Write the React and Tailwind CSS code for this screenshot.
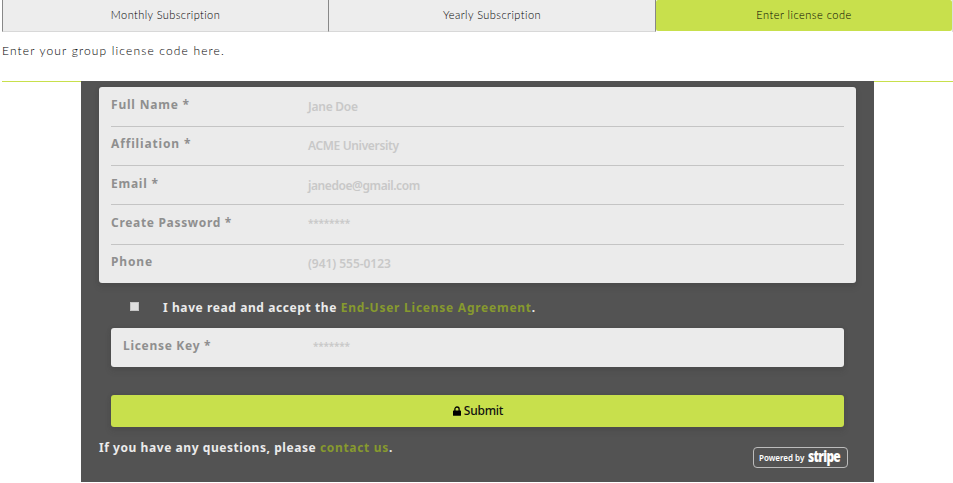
import React from "react";

const fields = [
  { label: "Full Name *", hint: "Jane Doe", row: "h-[40px] border-b", labelGap: "tracking-[0.8px]", hintGap: "pt-[2px] text-[12px] tracking-[-0.25px]", pad: "pt-[9px]" },
  { label: "Affiliation *", hint: "ACME University", row: "h-[39px] border-b", labelGap: "tracking-[0.85px]", hintGap: "pt-[2px] text-[12px] tracking-[-0.35px]", pad: "pt-[8px]" },
  { label: "Email *", hint: "janedoe@gmail.com", row: "h-[39px] border-b", labelGap: "tracking-[0.75px]", hintGap: "pt-[2px] text-[12px] tracking-[-0.42px]", pad: "pt-[9px]" },
  { label: "Create Password *", hint: "********", row: "h-[40px] border-b", labelGap: "tracking-[0.68px]", hintGap: "text-[10px] tracking-[-0.2px]", pad: "pt-[9px]" },
  { label: "Phone", hint: "(941) 555-0123", row: "h-[38px]", labelGap: "tracking-[0.85px]", hintGap: "pt-[2px] text-[12px] tracking-[-0.04px]", pad: "pt-[8px]" },
];

const shadow = "shadow-[0_4px_6px_rgba(50,50,50,0.15),0_0_4px_rgba(50,50,50,0.2)]";

function Field({ label, hint, row, labelGap, hintGap, pad }) {
  return (
    <div className={`flex items-start border-[#c4c4c4] ${row} ${pad}`}>
      <span className={`w-[197px] leading-[18px] text-[#8f8f8f] ${labelGap}`}>{label}</span>
      <span className={`leading-[18px] font-semibold text-[#c8c8c8] ${hintGap}`}>{hint}</span>
    </div>
  );
}

function Lock() {
  return (
    <svg className="h-[10px] w-[8px]" viewBox="0 0 8 10">
      <path d="M1.9 5V3.1a2.1 2.1 0 0 1 4.2 0V5" fill="none" stroke="#000" strokeWidth="1.3" />
      <rect y="4.5" width="8" height="5.3" rx=".6" fill="#000" />
    </svg>
  );
}

export default function App() {
  return (
    <div className="h-[483px] w-[953px] overflow-hidden bg-white font-['Noto_Sans',sans-serif] text-[12px]">
      <nav className="ml-[2px] flex h-[32px] font-['Lato',sans-serif] text-[11px] leading-[30px] font-light text-black">
        <div className="w-[326px] border-b border-l border-b-[#d8d8d8] border-l-[#888] bg-[#ededed] text-center tracking-[0.42px]">Monthly Subscription</div>
        <div className="w-[328px] border-x border-b border-x-[#888] border-b-[#d8d8d8] bg-[#ededed] text-center tracking-[0.45px]">Yearly Subscription</div>
        <div className="h-[31px] w-[296px] rounded-[2px] bg-[#c8e04c] text-center tracking-[0.5px]">Enter license code</div>
        <div className="w-px bg-[#ddd]" />
      </nav>
      <p className="ml-[2px] h-[49px] pt-[10px] font-['Lato',sans-serif] text-[12px] leading-[18px] font-light tracking-[1.15px] text-black">Enter your group license code here.</p>
      <div className="ml-[2px] flex">
        <div className="h-px w-[79px] bg-[#c8e04c]" />
        <main className="h-[401px] w-[793px] bg-[#535353] px-[18px] pt-[6px] font-bold">
          <section className={`h-[196px] w-[757px] rounded-[3px] bg-[#ebebeb] px-[12px] ${shadow}`}>
            {fields.map((field) => <Field key={field.label} {...field} />)}
          </section>
          <div className="flex h-[45px] items-start pt-[16px] pl-[31px]">
            <div className="mt-[3px] h-[9px] w-[9px] border border-[#c6c6c6] bg-[#e0e0e0]" />
            <span className="ml-[24px] leading-[18px] tracking-[0.59px] whitespace-nowrap text-[#ebebeb]">I have read and accept the <a className="tracking-[0.75px] text-[#879a2e]">End-User License Agreement</a>.</span>
          </div>
          <section className={`ml-[12px] flex h-[39px] w-[733px] items-start rounded-[3px] bg-[#ebebeb] px-[12px] pt-[9px] ${shadow}`}>
            <span className="w-[190px] leading-[18px] tracking-[0.7px] text-[#8f8f8f]">License Key *</span>
            <span className="text-[10px] leading-[18px] font-semibold tracking-[-0.2px] text-[#c8c8c8]">*******</span>
          </section>
          <button className={`mt-[28px] ml-[12px] flex h-[32px] w-[733px] items-center justify-center gap-[3px] rounded-[3px] bg-[#c8e04c] pl-[1px] font-medium text-[#111] ${shadow}`}>
            <Lock />
            <span className="tracking-[-0.25px]">Submit</span>
          </button>
          <footer className="flex items-start justify-between pr-[8px]">
            <p className="pt-[12px] leading-[18px] tracking-[0.56px] text-[#ebebeb]">If you have any questions, please <a className="tracking-[0.68px] text-[#879a2e]">contact us</a>.</p>
            <div className="mt-[20px] flex h-[21px] w-[95px] items-center rounded-[4px] border border-[#bcbcbc] pl-[5px] text-white">
              <span className="w-[49px] text-[8px] font-semibold whitespace-nowrap">Powered by</span>
              <span className="mt-[-3px] w-[36px] origin-left scale-x-[0.8] font-['Open_Sans',sans-serif] text-[15px] leading-[17px] font-extrabold tracking-[-0.9px]">stripe</span>
            </div>
          </footer>
        </main>
        <div className="h-px flex-1 bg-[#c8e04c]" />
      </div>
    </div>
  );
}
